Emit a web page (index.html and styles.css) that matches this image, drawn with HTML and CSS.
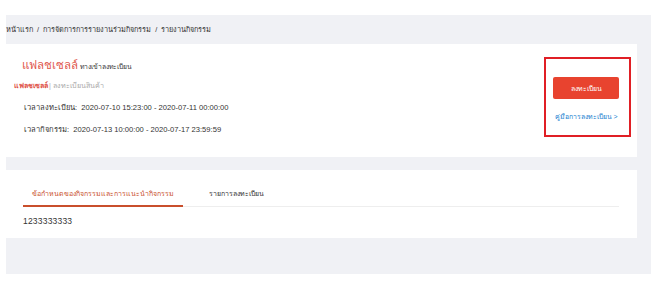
FILE: index.html
```html
<!DOCTYPE html>
<html>
  <head>
    <meta charset="UTF-8" />
    <title>รายงานกิจกรรม</title>
    <link rel="stylesheet" href="styles.css">
  </head>
  <body>
    <div class="main">
      <!-- breadcrumb -->
      <div class="crumbs">หน้าแรก &nbsp;/&nbsp; การจัดการการรายงานร่วมกิจกรรม &nbsp;/&nbsp; รายงานกิจกรรม</div>

      <!-- activity summary -->
      <div class="card card-info">
        <div class="info">
          <div class="title"><span class="title-red">แฟลชเซลล์</span> ทางเข้าลงทะเบียน</div>
          <div class="sub"><b>แฟลชเซลล์</b><span class="sub-gray">| ลงทะเบียนสินค้า</span></div>
          <div class="time">เวลาลงทะเบียน:&nbsp; 2020-07-10 15:23:00 - 2020-07-11 00:00:00</div>
          <div class="time">เวลากิจกรรม:&nbsp; 2020-07-13 10:00:00 - 2020-07-17 23:59:59</div>
        </div>
        <div class="action-box">
          <button class="btn-register">ลงทะเบียน</button>
          <a class="guide-link" href="#">คู่มือการลงทะเบียน &gt;</a>
        </div>
      </div>

      <!-- tabs -->
      <div class="card card-tabs">
        <div class="tabs">
          <div class="tab active">ข้อกำหนดของกิจกรรมและการแนะนำกิจกรรม</div>
          <div class="tab">รายการลงทะเบียน</div>
        </div>
        <div class="tab-body">1233333333</div>
      </div>
    </div>
  </body>
</html>
```

FILE: styles.css
```css
body {
  margin: 0;
  background: #fff;
  font-family: "Liberation Sans", Arial, sans-serif;
  color: #333;
}

/* gray page area */
.main {
  margin: 15px 13px 0 6px;
  height: 259px;
  background-color: #f0f1f5;
}

.crumbs {
  height: 29px;
  line-height: 29px;
  font-size: 7.3px;
  color: #333;
}

.card {
  background-color: #fff;
  margin-right: 14px;
}

/* summary card */
.card-info {
  height: 113px;
  display: flex;
  justify-content: space-between;
}

.info {
  padding-top: 12px;
  font-size: 7.6px;
}

.title {
  padding-left: 16px;
  height: 18px;
  line-height: 18px;
  font-size: 6.8px;
}
.title-red {
  color: #e0564c;
  font-size: 11.5px;
}

.sub {
  padding-left: 8px;
  margin-top: 3px;
  line-height: 18px;
  font-size: 7.2px;
}
.sub b {
  color: #e0564c;
}
.sub-gray {
  color: #aaa;
  margin-left: 1px;
}

.time {
  padding-left: 18px;
  margin-top: 3px;
  line-height: 19px;
}
.time + .time {
  margin-top: 3px;
}

/* right box with red frame */
.action-box {
  margin: 13px 6px 0 0;
  width: 83px;
  height: 76px;
  border: 2px solid #e01f25;
  display: flex;
  flex-direction: column;
  align-items: center;
}

.btn-register {
  margin-top: 18px;
  margin-right: 3px;
  width: 66px;
  height: 22px;
  border: none;
  border-radius: 2px;
  background-color: #e8432f;
  color: #fff;
  font-family: inherit;
  font-size: 7px;
  padding: 0;
}

.guide-link {
  margin-top: 12px;
  margin-right: 3px;
  font-size: 6.9px;
  color: #1a7fd0;
  text-decoration: none;
}

/* tabs card */
.card-tabs {
  margin-top: 13px;
  height: 68px;
  padding: 0 18px 0 17px;
}

.tabs {
  display: flex;
  padding-top: 16px;
  border-bottom: 1px solid #eee;
}

.tab {
  padding: 0 9px;
  height: 19px;
  font-size: 7px;
  line-height: 15px;
  color: #333;
  margin-right: 17px;
}

.tab.active {
  color: #c94f2c;
  border-bottom: 2px solid #c94f2c;
  margin-bottom: -1px;
}

.tab-body {
  padding-top: 9px;
  font-size: 8.5px;
  letter-spacing: 0.2px;
  color: #333;
}
```
